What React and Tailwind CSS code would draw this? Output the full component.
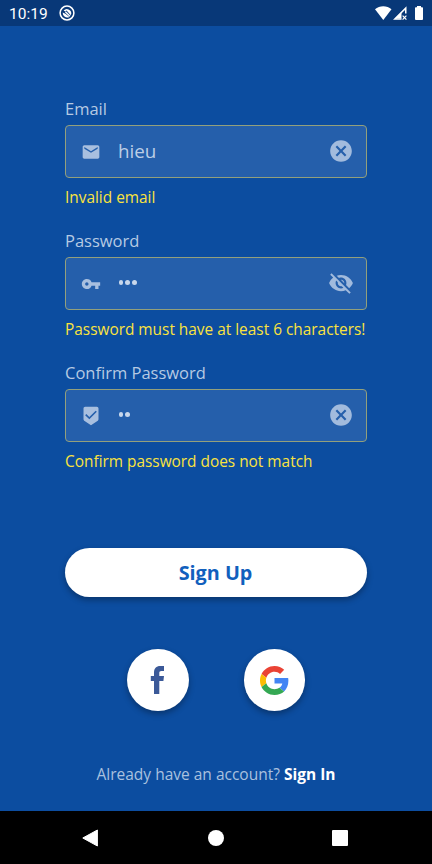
import { MdEmail, MdVpnKey, MdBeenhere, MdCancel, MdVisibilityOff } from "react-icons/md";

function StatusBar() {
  return (
    <header className="flex h-[26px] items-center justify-between bg-[#083878] pr-[6px] pl-[9px] text-white">
      <div className="flex items-center gap-[11px]">
        <span className="pt-[2px] font-['Roboto',sans-serif] text-[15.5px] leading-[24px]">10:19</span>
        <svg className="h-4 w-4" viewBox="0 0 16 16" fill="none">
          <circle cx="8" cy="8" r="6.9" stroke="white" strokeWidth="1.5" />
          <path d="M4.6 5.6A4.4 4.4 0 0 1 12.3 8.6L11.8 10.2 7.6 5.6 6.2 6.4Z" fill="white" />
          <path d="M3.7 7.6L6.4 8.8 10.4 11.9A4.5 4.5 0 0 1 3.7 7.6Z" fill="white" />
          <path d="M6.4 6.8l4.6 4.4" stroke="white" strokeWidth="1.4" />
        </svg>
      </div>
      <svg className="h-[26px] w-[52px]" viewBox="374 0 52 26" fill="white">
        <path d="M375 9.2C379.5 5.3 387 5.3 391.5 9.2L383.3 20Z" />
        <path d="M393 19.7L406.5 6.2V13.5H405V10L396.5 18.3H401.5V19.7Z" />
        <path d="M401.5 12V18.5H395Z" />
        <path d="M402.6 15.6l3.8 4M406.4 15.6l-3.8 4" stroke="white" strokeWidth="1.2" />
        <path d="M417 6h4v1.3h1.2q.8 0 .8.8V19q0 .9-.9.9h-6.2q-.9 0-.9-.9V8.1q0-.8.8-.8H417Z" />
      </svg>
    </header>
  );
}

function Field({ label, icon: Icon, value, dots = 0, action: Action, error }) {
  return (
    <div className="h-[132px]">
      <label className="block h-[29px] text-[16.5px] leading-[26px] text-[#b6cae3]">{label}</label>
      <div className="flex h-[53px] items-center rounded-[4px] border border-[#93a07c] bg-[#255fab] pr-[12px] pb-px pl-[15px]">
        <Icon className="mt-[2px] h-5 w-5 shrink-0 text-[#a8bfdf]" />
        <div className="ml-[17px] flex flex-1 items-center text-[18.8px] leading-[26px] text-[#bccee6]">
          {value && <span className="-mt-px">{value}</span>}
          {dots > 0 && (
            <span className="mb-[2px] flex gap-[2.2px] pl-[0.5px]">
              {Array.from({ length: dots }, (_, i) => (
                <i key={i} className="h-[5px] w-[4.7px] rounded-full bg-[#c8d7eb]" />
              ))}
            </span>
          )}
        </div>
        <Action className="h-[26px] w-[26px] shrink-0 text-[#a2bbdd]" />
      </div>
      <p className="mt-[7px] text-[15.4px] leading-[26px] whitespace-nowrap text-[#fae33e]">{error}</p>
    </div>
  );
}

function RoundButton({ children, label }) {
  return (
    <button
      aria-label={label}
      className="flex h-[62px] w-[61.5px] items-center justify-center rounded-full bg-white shadow-[0_3px_6px_rgba(0,0,0,0.32)]"
    >
      {children}
    </button>
  );
}

export default function App() {
  return (
    <div className="flex h-[864px] w-[432px] flex-col overflow-hidden bg-[#0c4da0] font-['Open_Sans',sans-serif]">
      <StatusBar />
      <main className="flex flex-1 flex-col px-[65px] pt-[70px]">
        <form>
          <Field label="Email" icon={MdEmail} value="hieu" action={MdCancel} error="Invalid email" />
          <Field
            label="Password"
            icon={MdVpnKey}
            dots={3}
            action={MdVisibilityOff}
            error="Password must have at least 6 characters!"
          />
          <Field
            label="Confirm Password"
            icon={MdBeenhere}
            dots={2}
            action={MdCancel}
            error="Confirm password does not match"
          />
        </form>
        <button className="mt-[56px] h-[49px] w-full shrink-0 rounded-full bg-white pr-px text-[19.8px] font-bold text-[#1160bd] shadow-[0_3px_6px_rgba(0,0,0,0.32)]">
          Sign Up
        </button>
        <div className="mt-[52px] flex justify-center gap-[55px]">
          <RoundButton label="Facebook">
            <svg className="h-[30px] w-[16px]" viewBox="0 0 16 30" fill="#3b5998">
              <path d="M4 29V16H.8V11H4V7.8C4 3.2 6.2 1 10.3 1H14V6H11.4C9.8 6 9.3 6.7 9.3 8.1V11H14L13.4 16H9.3V29Z" />
            </svg>
          </RoundButton>
          <RoundButton label="Google">
            <svg className="h-[29px] w-[29px]" viewBox="0 0 48 48">
              <path fill="#EA4335" d="M24 9.5c3.54 0 6.71 1.22 9.21 3.6l6.85-6.85C35.9 2.38 30.47 0 24 0 14.62 0 6.51 5.38 2.56 13.22l7.98 6.19C12.43 13.72 17.74 9.5 24 9.5z" />
              <path fill="#4285F4" d="M46.98 24.55c0-1.57-.15-3.09-.38-4.55H24v9.02h12.94c-.58 2.96-2.26 5.48-4.78 7.18l7.73 6c4.51-4.18 7.09-10.36 7.09-17.65z" />
              <path fill="#FBBC05" d="M10.53 28.59c-.48-1.45-.76-2.99-.76-4.59s.27-3.14.76-4.59l-7.98-6.19C.92 16.46 0 20.12 0 24c0 3.88.92 7.54 2.56 10.78l7.97-6.19z" />
              <path fill="#34A853" d="M24 48c6.48 0 11.93-2.13 15.89-5.81l-7.73-6c-2.15 1.45-4.92 2.3-8.16 2.3-6.26 0-11.57-4.22-13.47-9.91l-7.98 6.19C6.51 42.62 14.62 48 24 48z" />
            </svg>
          </RoundButton>
        </div>
        <p className="mt-[50px] text-center text-[15.5px] leading-[26px] whitespace-nowrap text-[#a9c1df]">
          Already have an account? <b className="font-bold text-white">Sign In</b>
        </p>
      </main>
      <nav className="flex h-[53px] shrink-0 items-center justify-between bg-black pr-[84px] pl-[82px]">
        <svg className="h-[18px] w-[17px]" viewBox="0 0 17 18">
          <path d="M15.4 1v16L.8 9Z" fill="white" stroke="white" strokeWidth="1" strokeLinejoin="round" />
        </svg>
        <span className="h-4 w-4 rounded-full bg-white" />
        <span className="h-4 w-4 rounded-[1px] bg-white" />
      </nav>
    </div>
  );
}
